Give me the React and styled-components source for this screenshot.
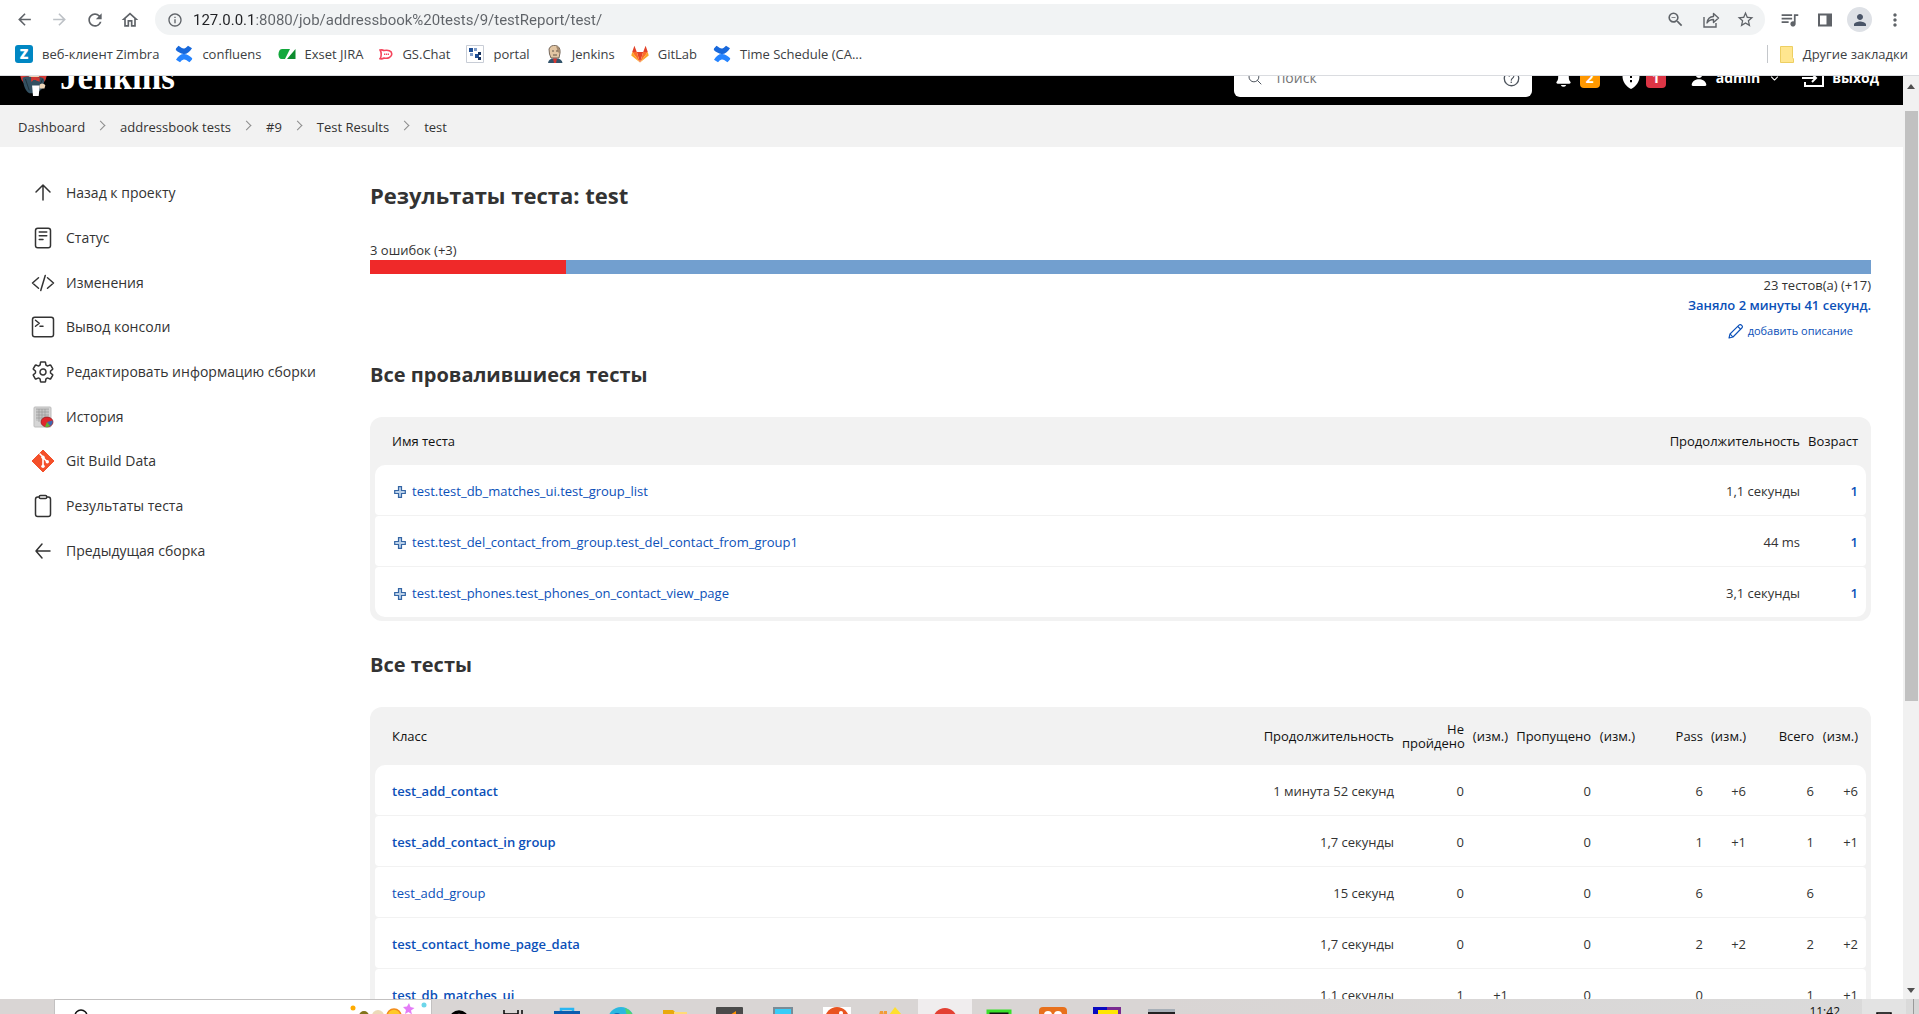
import React from "react";
import styled, { createGlobalStyle } from "styled-components";
import {
  MdArrowBack,
  MdArrowForward,
  MdRefresh,
  MdOutlineHome,
  MdInfoOutline,
  MdZoomOut,
  MdStarBorder,
  MdQueueMusic,
  MdPerson,
  MdMoreVert,
} from "react-icons/md";
import {
  IoReaderOutline,
  IoCodeSlashOutline,
  IoTerminalOutline,
  IoSettingsOutline,
  IoClipboardOutline,
  IoSearchOutline,
  IoHelpCircleOutline,
  IoNotifications,
  IoPerson,
  IoChevronDown,
} from "react-icons/io5";

const FONT = '"Open Sans", "Noto Sans", sans-serif';

const GlobalStyle = createGlobalStyle`
  *, *::before, *::after { box-sizing: border-box; }
  html, body { margin: 0; height: 100%; overflow: hidden; }
  body { font-family: ${FONT}; font-size: 13px; color: #333; background: #fff; }
  button, input { font-family: inherit; }
  a { text-decoration: none; color: inherit; }
  svg { display: block; flex: none; }
`;

const Screen = styled.div`
  height: 100vh;
  display: flex;
  flex-direction: column;
  overflow: hidden;
`;

/* ---------- browser chrome ---------- */

const Chrome = styled.header`
  flex: none;
  background: #fff;
  border-bottom: 1px solid #dadce0;
`;

const Toolbar = styled.div`
  display: flex;
  align-items: center;
  height: 36px;
  padding: 3px 7px 0 11px;
`;

const ChromeButton = styled.button`
  display: flex;
  align-items: center;
  justify-content: center;
  width: 35px;
  height: 28px;
  padding: 0;
  border: 0;
  background: none;
  color: ${(p) => (p.$faded ? "#bdc1c6" : "#5f6368")};
`;

const NavGroup = styled.div`
  display: flex;
  margin-right: 8px;
  margin-left: -4px;
`;

const AddressBar = styled.div`
  flex: 1;
  display: flex;
  align-items: center;
  height: 31px;
  padding: 0 2px 0 12px;
  border-radius: 16px;
  background: #f1f3f4;
  color: #5f6368;
  margin-right: 7px;
`;

const AddressInput = styled.input`
  flex: 1;
  margin-left: 10px;
  padding: 0;
  border: 0;
  outline: 0;
  font-family: Roboto, ${FONT};
  font-size: 15px;
  line-height: 20px;
  -webkit-text-fill-color: transparent;
  background: linear-gradient(to right, #202124 61px, #5f6368 61px);
  -webkit-background-clip: text;
  background-clip: text;
`;

const Avatar = styled.span`
  display: flex;
  align-items: center;
  justify-content: center;
  width: 25px;
  height: 25px;
  border-radius: 50%;
  background: #dee1e6;
  color: #4a5568;
`;

const Bookmarks = styled.nav`
  display: flex;
  align-items: center;
  height: 39px;
  padding: 0 11px 3px 15px;
`;

const Bookmark = styled.a`
  display: flex;
  align-items: center;
  gap: 9px;
  margin-right: 16px;
  font-size: 13px;
  line-height: 18px;
  color: #3c4043;
  white-space: nowrap;
`;

const OtherBookmarks = styled(Bookmark)`
  margin: 0 0 0 auto;
  padding-left: 12px;
  border-left: 1px solid #c4c7cb;
`;

const ZimbraMark = styled.span`
  width: 18px;
  height: 18px;
  border-radius: 3px;
  background: #0087c3;
  color: #fff;
  font-weight: 800;
  font-size: 14px;
  line-height: 18px;
  text-align: center;
`;

/* ---------- page viewport ---------- */

const Viewport = styled.div`
  flex: 1;
  min-height: 0;
  display: flex;
`;

const Page = styled.div`
  flex: 1;
  min-width: 0;
  overflow: hidden;
`;

const Scrollbar = styled.div`
  flex: none;
  width: 16px;
  display: flex;
  flex-direction: column;
  align-items: center;
  justify-content: space-between;
  background: #f1f1f1;
  padding: 8px 0 6px;
`;

const Track = styled.div`
  flex: 1;
  width: 13px;
  padding: 22px 0;
`;

const Thumb = styled.div`
  height: 69%;
  background: #c1c1c1;
`;

const Masthead = styled.div`
  display: flex;
  align-items: flex-end;
  height: 29px;
  overflow: hidden;
  background: #000;
  color: #fff;
`;

const MastheadRow = styled.div`
  flex: 1;
  display: flex;
  align-items: center;
  height: 54px;
  padding: 0 24px 0 18px;
`;

const Brand = styled.a`
  display: flex;
  align-items: center;
  gap: 11px;
  margin-right: auto;
  font-family: "Liberation Serif", serif;
  font-weight: 700;
  font-size: 35px;
  line-height: 36px;
`;

const SearchBox = styled.label`
  display: flex;
  align-items: center;
  gap: 14px;
  width: 298px;
  height: 38px;
  padding: 0 10px 0 13px;
  border-radius: 6px;
  background: #fff;
  color: #4d545d;
`;

const SearchInput = styled.input`
  flex: 1;
  min-width: 0;
  padding: 0;
  border: 0;
  outline: 0;
  background: none;
  font-size: 14px;
  line-height: 20px;
  &::placeholder { color: #757575; opacity: 1; }
`;

const MastheadLink = styled.a`
  display: flex;
  align-items: center;
  gap: ${(p) => p.$gap || 8}px;
  margin-left: ${(p) => p.$ml || 22}px;
  font-size: 14px;
  line-height: 20px;
  font-weight: 700;
`;

const Badge = styled.span`
  width: 20px;
  border-radius: 4px;
  background: ${(p) => p.$color};
  font-size: 14px;
  line-height: 20px;
  text-align: center;
`;

const Breadcrumbs = styled.nav`
  height: 42px;
  background: #f2f2f2;
`;

const Crumbs = styled.ol`
  display: flex;
  align-items: center;
  height: 100%;
  margin: 0;
  padding: 1px 18px 0;
  list-style: none;
`;

const Crumb = styled.li`
  display: flex;
  align-items: center;
  font-size: 13px;
  line-height: 18px;
  & + &::before {
    content: "";
    width: 7px;
    height: 7px;
    margin: 0 16px 2px 12px;
    border: solid #8c8c8c;
    border-width: 1px 1px 0 0;
    transform: rotate(45deg);
  }
`;

const Body = styled.div`
  display: flex;
`;

const Side = styled.nav`
  flex: none;
  width: 370px;
  padding: 24px 16px 0 31px;
`;

const Tasks = styled.ul`
  display: grid;
  grid-auto-rows: 1fr;
  height: 402px;
  margin: 0;
  padding: 0;
  list-style: none;
`;

const TaskLink = styled.a`
  display: flex;
  align-items: center;
  gap: 11px;
  height: 100%;
  font-size: 14px;
  line-height: 20px;
`;

const Main = styled.main`
  flex: 1;
  min-width: 0;
  padding: 32px 32px 0 0;
`;

const Title = styled.h1`
  margin: 0;
  font-size: 22px;
  line-height: 32px;
  font-weight: 700;
`;

const Subtitle = styled.h2`
  margin: 0;
  font-size: 20px;
  line-height: 30px;
  font-weight: 700;
`;

const Summary = styled.div`
  display: flex;
  flex-direction: column;
  margin: 29px 0 20px;
  font-size: 13px;
  line-height: 20px;
`;

const ResultBar = styled.div`
  display: flex;
  height: 14px;
  background: #729fcf;
`;

const FailedPart = styled.div`
  background: #ef2929;
`;

const SummaryRight = styled.div`
  display: flex;
  flex-direction: column;
  align-items: flex-end;
  padding-top: 1px;
`;

const LinkText = styled.a`
  color: #0b50b8;
  font-weight: ${(p) => p.$weight || 500};
`;

const EditLink = styled.a`
  display: flex;
  align-items: center;
  gap: 5px;
  margin: 7px 18px 0 0;
  color: #0b50b8;
  font-size: 11px;
  line-height: 18px;
  font-weight: 500;
`;

const TableFrame = styled.div`
  margin: 27px 0 29px;
  padding: 0 5px 3px;
  border-radius: 12px;
  background: #f2f2f2;
`;

const Table = styled.table`
  width: 100%;
  table-layout: fixed;
  border-collapse: separate;
  border-spacing: 0 1px;
`;

const Col = styled.col`
  width: ${(p) => (p.$w ? `${p.$w}px` : "auto")};
`;

const Th = styled.th`
  height: ${(p) => (p.$tall ? 56 : 46)}px;
  padding: ${(p) => (p.$first ? "0 8px 0 17px" : "0 8px 0 0")};
  font-size: 13px;
  line-height: 14px;
  font-weight: 400;
  color: #111;
  text-align: ${(p) => (p.$first ? "left" : "right")};
  white-space: ${(p) => (p.$wrap ? "normal" : "nowrap")};
`;

const Td = styled.td`
  height: 50px;
  padding: 1px 8px 0 0;
  background: #fff;
  font-size: 13px;
  line-height: 18px;
  text-align: right;
  white-space: nowrap;
  &:first-child {
    padding-left: 17px;
    text-align: left;
    border-radius: 4px 0 0 4px;
  }
  &:last-child { border-radius: 0 4px 4px 0; }
  tr:first-child > &:first-child { border-top-left-radius: 10px; }
  tr:first-child > &:last-child { border-top-right-radius: 10px; }
  tr:last-child > &:first-child { border-bottom-left-radius: 10px; }
  tr:last-child > &:last-child { border-bottom-right-radius: 10px; }
`;

const TestName = styled.span`
  display: flex;
  align-items: center;
  gap: 6px;
  padding-left: 2px;
`;

const ExpandButton = styled.button`
  padding: 2px 0 0;
  border: 0;
  background: none;
`;

/* ---------- desktop taskbar ---------- */

const Taskbar = styled.footer`
  flex: none;
  display: flex;
  height: 15px;
  overflow: hidden;
  background: linear-gradient(to right, #d9d5d4, #d9d5d4 60%, #dadada);
`;

const StartButton = styled.button`
  flex: none;
  width: 54px;
  height: 40px;
  padding: 12px 0 0 20px;
  border: 0;
  background: none;
`;

const TaskSearch = styled.div`
  flex: none;
  display: flex;
  justify-content: space-between;
  width: 378px;
  height: 40px;
  padding: 0 0 0 18px;
  border: solid #c3c1c1;
  border-width: 1px 1px 0;
  background: #fff;
`;

const TaskSlot = styled.button`
  flex: none;
  display: flex;
  justify-content: center;
  width: 54px;
  height: 40px;
  padding: 0;
  border: 0;
  background: ${(p) => (p.$active ? "#f0edee" : "none")};
`;

const Tray = styled.div`
  display: flex;
  margin-left: auto;
  height: 40px;
`;

const Clock = styled.time`
  padding: 4px 22px 0 0;
  font-size: 12px;
  line-height: 18px;
  color: #111;
`;

const Notices = styled.button`
  width: 44px;
  padding: 0 0 0 14px;
  border: 0;
  background: #e3e3e3;
`;

const ShowDesktop = styled.div`
  width: 13px;
  border-right: 5px solid #d6d6d6;
  box-shadow: inset -1px 0 #9a9a9a;
`;

/* ---------- drawings ---------- */

const ShareIcon = () => (
  <svg width="18" height="18" viewBox="0 0 18 18" fill="none" stroke="#5f6368" strokeWidth="1.4">
    <path d="M2 6v10h12v-4" />
    <path d="M5 12c.5-4 3-6.300 6.500-6.500V2.500L16.500 7l-5 4.500V8.500C8.500 8.500 6.500 9.600 5 12z" strokeLinejoin="round" />
  </svg>
);

const PanelIcon = () => (
  <svg width="16" height="16" viewBox="0 0 16 16">
    <path d="M1 1.500h14v13H1z M3 3.500v9h6.500v-9z" fill="#5f6368" fillRule="evenodd" />
  </svg>
);

const ConfluenceIcon = () => (
  <svg width="18" height="18" viewBox="0 0 18 18">
    <path d="M1 3.500 3.500.8C6 2.500 7.500 3.800 9.300 3.500 11 3.200 12 1.800 13 .8L17 3.300C14.500 7.500 11.500 9.300 8.500 9 5.500 8.500 3 7 .8 5z" fill="#1868db" />
    <path d="M17 14.500 14.500 17.200C12 15.500 10.500 14.200 8.700 14.500 7 14.800 6 16.200 5 17.200L1 14.700C3.500 10.500 6.500 8.600 9.500 9c3 .4 5.500 2.200 7.700 4.200z" fill="#2684ff" />
  </svg>
);

const ExsetIcon = () => (
  <svg width="18" height="18" viewBox="0 0 18 18">
    <path d="M4 4h8L7 14H3.500C1.500 14 .5 12 .5 9.500S1.500 4 4 4z" fill="#12a83c" />
    <path d="M17.500 4v10H9z" fill="#0c8c2e" />
  </svg>
);

const ChatIcon = () => (
  <svg width="14" height="14" viewBox="0 0 14 14" fill="none" stroke="#f5455c" strokeWidth="1.600">
    <path d="M1 3c2-.4 3.200 0 4 .6C9 2.400 12.800 4 12.800 7S9 12 5 11c-1.200.8-2.600 1-4 .7C2.600 10 2.600 5 1 3z" />
    <path d="M5 7.200h5" strokeDasharray="1.400 .6" />
  </svg>
);

const PortalIcon = () => (
  <svg width="18" height="18" viewBox="0 0 18 18">
    <path d="M.5.500h17v17H.5z" fill="#fff" stroke="#c8cdd6" />
    <path d="M3 3h4v4H3z M9 9h4v4H9z" fill="#1f4f96" />
    <path d="M8 3h3v3H8z M4 8h3v3H4z" fill="#7e9cc9" />
    <path d="M12 12h3v3h-3z M12 7h3v3h-3z" fill="#16325f" />
  </svg>
);

const ButlerIcon = () => (
  <svg width="17" height="18" viewBox="0 0 17 18">
    <path d="M3 4C4 1 7 0 9.500.500 13 1 14.500 4 14 8l-1 5H5L3.500 9z" fill="#e3c6a3" stroke="#57493f" strokeWidth=".8" />
    <path d="M10 1c3 1 4.500 3.500 4 8l-2-2z" fill="#a58b70" />
    <path d="M2 18c.5-3 2.500-4.500 5-4.500h4c3 0 5 1.500 5.500 4.500z" fill="#33546b" />
    <path d="M7 13.500h4l-1 4.500H8z" fill="#d33833" />
    <path d="M6 6h2M10 6h2M7 10h4" stroke="#57493f" strokeWidth=".9" />
  </svg>
);

const GitLabIcon = () => (
  <svg width="18" height="18" viewBox="0 0 18 18">
    <path d="M9 17.500 5.800 7h6.400z" fill="#e24329" />
    <path d="M9 17.500 5.800 7H1.200z M9 17.500 12.200 7h4.600z" fill="#fc6d26" />
    <path d="M1.200 7 .3 10.500 9 17.500z M16.800 7l.9 3.500L9 17.500z" fill="#fca326" />
    <path d="M1.200 7 3.400.8 5.800 7z M16.800 7 14.600.8 12.200 7z" fill="#e24329" />
  </svg>
);

const FolderIcon = () => (
  <svg width="14" height="17" viewBox="0 0 14 17">
    <path d="M.5.500h12v11l1 1.500v3.500H.5z" fill="#ffe68f" stroke="#edcf62" />
  </svg>
);

const JenkinsLogo = () => (
  <svg width="31" height="38" viewBox="0 0 31 40">
    <circle cx="15.500" cy="16" r="14" fill="#d33833" />
    <path d="M9 3c4-3 11-2 13 3s1 10-1 13H11C8 15 7 7 9 3z" fill="#f0d6b7" />
    <path d="M4 20c3-2 7-2 9-1l4 3 4-3c3 0 5 1 6 3l-2 9-6 5H11c-4-2-6-8-7-16z" fill="#335061" />
    <path d="m13 19 4 2 5-2v5l-5-2-4 2z" fill="#d33833" />
    <path d="M15 22h3l1 6h-5z" fill="#335061" />
    <path d="M14 28h8l-1 11h-6z" fill="#fff" />
    <path d="M22 27c2-2 5-1 6 1l-1 3h-5z" fill="#f0d6b7" />
    <path d="M7 21l4 12M25 21l-2 5" stroke="#1d2f3a" strokeWidth="1" />
  </svg>
);

const ShieldIcon = () => (
  <svg width="18" height="22" viewBox="0 0 18 22">
    <path d="M9 0 17.500 3v6c0 6-3.500 10.500-8.500 13C4 19.500.5 15 .5 9V3z" fill="#fff" />
    <path d="M8 5h2v6H8z M8 13h2v2.200H8z" fill="#000" />
  </svg>
);

const ExitIcon = () => (
  <svg width="22" height="20" viewBox="0 0 22 20" fill="none" stroke="#fff" strokeWidth="2">
    <path d="M3 6V2h18v16H3v-4" />
    <path d="M0 10h14M10 6l4 4-4 4" />
  </svg>
);

const ArrowIcon = ({ d }) => (
  <svg width="24" height="24" viewBox="0 0 24 24" fill="none" stroke="#333" strokeWidth="1.500" strokeLinecap="round" strokeLinejoin="round">
    <path d={d} />
  </svg>
);

const PencilIcon = () => (
  <svg width="15" height="15" viewBox="0 0 15 15" fill="none" stroke="#0b50b8" strokeWidth="1.100" strokeLinejoin="round">
    <path d="M1 14l1-4L11 1.200c.8-.8 2-.6 2.700.1s.9 1.900.1 2.700L5 13z" />
    <path d="M9.800 2.500l2.700 2.700M2.200 10.200l2.600 2.600" />
  </svg>
);

const HistoryIcon = () => (
  <svg width="24" height="24" viewBox="0 0 24 24">
    <rect x="3" y="2" width="17" height="20" rx="1" fill="#d6d6d6" stroke="#bdbdbd" />
    <path d="M5 4h13v12H5z" fill="#c6c6c6" />
    <path d="M5 4h13M5 7h13M5 10h13M5 13h13M8 4v13M11 4v13M14 4v13" stroke="#999" strokeWidth=".7" />
    <ellipse cx="16" cy="17" rx="6" ry="5" fill="#e0262b" stroke="#8d1b1e" strokeWidth=".7" />
    <path d="M16 17l5.500-1.500A5 5 0 0 1 19 21z" fill="#3e68b0" />
    <path d="M16 17l3 4a6 6 0 0 1-5 .8z" fill="#5fb336" />
  </svg>
);

const GitIcon = () => (
  <svg width="24" height="24" viewBox="0 0 24 24">
    <path d="M12 1 23 12 12 23 1 12z" fill="#f4502a" stroke="#f4502a" strokeLinejoin="round" />
    <path d="M8.500 4.500l3.500 3.500v9.500M12 8.500l4.500 4.500" stroke="#fff" strokeWidth="1.600" fill="none" />
    <circle cx="12" cy="8.200" r="1.700" fill="#fff" />
    <circle cx="12" cy="17.200" r="1.700" fill="#fff" />
    <circle cx="16.300" cy="12.700" r="1.700" fill="#fff" />
  </svg>
);

const PlusIcon = () => (
  <svg width="12" height="12" viewBox="0 0 12 12">
    <path d="M4.500.700h3v3.800h3.800v3H7.500v3.800h-3V7.500H.7v-3h3.800z" fill="#bcd2ea" stroke="#3465a4" strokeWidth="1.200" />
  </svg>
);

const Triangle = ({ down }) => (
  <svg width="8" height="5" viewBox="0 0 8 5">
    <path d={down ? "M0 0h8L4 5z" : "M0 5h8L4 0z"} fill="#505050" />
  </svg>
);

const WindowsIcon = () => (
  <svg width="16" height="16" viewBox="0 0 16 16">
    <path d="M0 2.500 6 1.500v6H0zM7 1.300 16 0v7.500H7zM0 8.500h6v6l-6-1zM7 8.500h9V16l-9-1.300z" fill="#000" />
  </svg>
);

const SearchGlyph = () => (
  <svg width="20" height="24" viewBox="0 0 20 24" fill="none" stroke="#111" strokeWidth="1.500">
    <circle cx="8" cy="16" r="6" />
  </svg>
);

const Decoration = () => (
  <svg width="85" height="20" viewBox="0 0 85 20">
    <circle cx="7" cy="8" r="2.500" fill="#ffab00" />
    <circle cx="18" cy="16" r="5" fill="#82731a" />
    <circle cx="32" cy="16" r="6" fill="#ecd9b8" />
    <circle cx="48" cy="16" r="7" fill="#ffc928" stroke="#f28c1c" strokeWidth="1.500" />
    <path d="M63 3l1.500 4 4 1-3.500 2.500 1 4-3.500-2.500-3.500 2 1-4-3-3 4-.5z" fill="#e47cf7" />
    <circle cx="78" cy="5" r="2.500" fill="#6cd6ea" />
  </svg>
);

const TASK_ICONS = [
  <circle cx="14" cy="21" r="8" fill="none" stroke="#000" strokeWidth="3.500" />,
  <path d="M5 11v4h14v-4M23 11v10" fill="none" stroke="#000" strokeWidth="1.500" />,
  <g>
    <path d="M8 13v-3h12v3" fill="none" stroke="#29b6f2" strokeWidth="2.500" />
    <path d="M1 12h26v16H1z" fill="#0b5cae" />
  </g>,
  <g>
    <circle cx="14" cy="21" r="13" fill="#2bb8e0" />
    <path d="M18 9a13 13 0 0 1 9 12h-6z" fill="#4fd66f" />
    <circle cx="10" cy="18" r="4" fill="#0c6ab8" />
  </g>,
  <g>
    <path d="M2 11h10l2 2v12H2z" fill="#e9a90c" />
    <path d="M13 13h13v12H13z" fill="#ffdb78" />
  </g>,
  <g>
    <rect x="1" y="8" width="27" height="20" rx="1" fill="#4a4a4a" />
    <path d="M12 18 21 12v8z" fill="#ff9300" />
  </g>,
  <rect x="5" y="9" width="18" height="18" fill="#38cdf8" stroke="#7b8b96" strokeWidth="2" />,
  <g>
    <path d="M0 8h28v20H0z" fill="#fff" />
    <circle cx="14" cy="20" r="12" fill="#e95420" />
    <circle cx="18" cy="14" r="2" fill="#fff" />
  </g>,
  <g>
    <path d="M12 16l6-8 7 8z" fill="#ffdf2e" />
    <path d="M3 12h3v4H2zM7 12h3v4H6z" fill="#f29b38" />
  </g>,
  <circle cx="14" cy="21" r="12" fill="#e34133" />,
  <path d="M3 12h22v10H3z" fill="#111" stroke="#3be02b" strokeWidth="3" />,
  <g>
    <rect x="0" y="8" width="28" height="22" rx="4" fill="#e8701c" />
    <circle cx="9" cy="16" r="4" fill="#fff" />
    <circle cx="19" cy="16" r="4" fill="#fff" />
  </g>,
  <g>
    <path d="M0 8h14v20H0z" fill="#0a0ac0" />
    <path d="M14 8h14v20H14z" fill="#7a2a90" />
    <path d="M7 20v-7h18" fill="none" stroke="#ffe600" strokeWidth="4" />
  </g>,
  <g>
    <path d="M1 11h27v16H1z" fill="#222" />
    <path d="M1 10h27v3H1z" fill="#a8b0b8" />
  </g>,
];

/* ---------- data ---------- */

const BOOKMARKS = [
  [<ZimbraMark aria-hidden="true">Z</ZimbraMark>, "веб-клиент Zimbra"],
  [<ConfluenceIcon />, "confluens"],
  [<ExsetIcon />, "Exset JIRA"],
  [<ChatIcon />, "GS.Chat"],
  [<PortalIcon />, "portal"],
  [<ButlerIcon />, "Jenkins"],
  [<GitLabIcon />, "GitLab"],
  [<ConfluenceIcon />, "Time Schedule (CA..."],
];

const CRUMBS = ["Dashboard", "addressbook tests", "#9", "Test Results", "test"];

const TASKS = [
  [<ArrowIcon d="M5 11l7-7 7 7M12 4.500V19" />, "Назад к проекту"],
  [<IoReaderOutline size={24} />, "Статус"],
  [<IoCodeSlashOutline size={24} />, "Изменения"],
  [<IoTerminalOutline size={24} />, "Вывод консоли"],
  [<IoSettingsOutline size={24} />, "Редактировать информацию сборки"],
  [<HistoryIcon />, "История"],
  [<GitIcon />, "Git Build Data"],
  [<IoClipboardOutline size={24} />, "Результаты теста"],
  [<ArrowIcon d="M11 5l-6 7 6 7M5.500 12H19" />, "Предыдущая сборка"],
];

const FAILED = [
  ["test.test_db_matches_ui.test_group_list", "1,1 секунды", "1"],
  ["test.test_del_contact_from_group.test_del_contact_from_group1", "44 ms", "1"],
  ["test.test_phones.test_phones_on_contact_view_page", "3,1 секунды", "1"],
];

const HEADERS = ["Продолжительность", "Не пройдено", "(изм.)", "Пропущено", "(изм.)", "Pass", "(изм.)", "Всего", "(изм.)"];
const WIDTHS = [150, 70, 44, 83, 44, 68, 43, 68, 44];

const CLASSES = [
  ["test_add_contact", 600, ["1 минута 52 секунд", "0", "", "0", "", "6", "+6", "6", "+6"]],
  ["test_add_contact_in group", 600, ["1,7 секунды", "0", "", "0", "", "1", "+1", "1", "+1"]],
  ["test_add_group", 400, ["15 секунд", "0", "", "0", "", "6", "", "6", ""]],
  ["test_contact_home_page_data", 600, ["1,7 секунды", "0", "", "0", "", "2", "+2", "2", "+2"]],
  ["test_db_matches_ui", 600, ["1,1 секунды", "1", "+1", "0", "", "0", "", "1", "+1"]],
];

const BrowserChrome = () => (
  <Chrome>
    <Toolbar>
      <NavGroup>
        <ChromeButton aria-label="Назад"><MdArrowBack size={19} /></ChromeButton>
        <ChromeButton aria-label="Вперёд" $faded><MdArrowForward size={19} /></ChromeButton>
        <ChromeButton aria-label="Обновить"><MdRefresh size={20} /></ChromeButton>
        <ChromeButton aria-label="Домой"><MdOutlineHome size={20} /></ChromeButton>
      </NavGroup>
      <AddressBar>
        <MdInfoOutline size={16} />
        <AddressInput aria-label="Адрес" defaultValue="127.0.0.1:8080/job/addressbook%20tests/9/testReport/test/" />
        <ChromeButton aria-label="Масштаб"><MdZoomOut size={19} /></ChromeButton>
        <ChromeButton aria-label="Поделиться"><ShareIcon /></ChromeButton>
        <ChromeButton aria-label="В закладки"><MdStarBorder size={19} /></ChromeButton>
      </AddressBar>
      <ChromeButton aria-label="Медиа"><MdQueueMusic size={21} /></ChromeButton>
      <ChromeButton aria-label="Боковая панель"><PanelIcon /></ChromeButton>
      <ChromeButton aria-label="Профиль"><Avatar><MdPerson size={18} /></Avatar></ChromeButton>
      <ChromeButton aria-label="Меню"><MdMoreVert size={20} /></ChromeButton>
    </Toolbar>
    <Bookmarks>
      {BOOKMARKS.map(([icon, text]) => (
        <Bookmark href="#" key={text}>{icon}{text}</Bookmark>
      ))}
      <OtherBookmarks href="#"><FolderIcon />Другие закладки</OtherBookmarks>
    </Bookmarks>
  </Chrome>
);

const PageHeader = () => (
  <>
    <Masthead>
      <MastheadRow>
        <Brand href="#"><JenkinsLogo />Jenkins</Brand>
        <SearchBox>
          <IoSearchOutline size={16} />
          <SearchInput type="text" placeholder="поиск" aria-label="поиск" />
          <IoHelpCircleOutline size={21} />
        </SearchBox>
        <MastheadLink href="#" $gap={7}><IoNotifications size={19} /><Badge $color="#ff9800">2</Badge></MastheadLink>
        <MastheadLink href="#" $gap={6}><ShieldIcon /><Badge $color="#dc3545">1</Badge></MastheadLink>
        <MastheadLink href="#" $ml={24}><IoPerson size={18} />admin</MastheadLink>
        <MastheadLink href="#" $ml={9} aria-label="Меню пользователя"><IoChevronDown size={11} /></MastheadLink>
        <MastheadLink href="#" $gap={8}><ExitIcon />выход</MastheadLink>
      </MastheadRow>
    </Masthead>
    <Breadcrumbs>
      <Crumbs>
        {CRUMBS.map((c) => (
          <Crumb key={c}><a href="#">{c}</a></Crumb>
        ))}
      </Crumbs>
    </Breadcrumbs>
  </>
);

const FailedTable = () => (
  <TableFrame>
    <Table>
      <colgroup><Col /><Col $w={160} /><Col $w={58} /></colgroup>
      <thead>
        <tr><Th $first>Имя теста</Th><Th>Продолжительность</Th><Th>Возраст</Th></tr>
      </thead>
      <tbody>
        {FAILED.map(([name, time, age]) => (
          <tr key={name}>
            <Td>
              <TestName>
                <ExpandButton aria-label="Подробнее"><PlusIcon /></ExpandButton>
                <LinkText href="#">{name}</LinkText>
              </TestName>
            </Td>
            <Td>{time}</Td>
            <Td><LinkText href="#" $weight={600}>{age}</LinkText></Td>
          </tr>
        ))}
      </tbody>
    </Table>
  </TableFrame>
);

const ClassTable = () => (
  <TableFrame>
    <Table>
      <colgroup>
        <Col />
        {WIDTHS.map((w, i) => <Col key={i} $w={w} />)}
      </colgroup>
      <thead>
        <tr>
          <Th $first $tall>Класс</Th>
          {HEADERS.map((h, i) => <Th key={i} $tall $wrap={i === 1}>{h}</Th>)}
        </tr>
      </thead>
      <tbody>
        {CLASSES.map(([name, weight, cells]) => (
          <tr key={name}>
            <Td><LinkText href="#" $weight={weight}>{name}</LinkText></Td>
            {cells.map((c, i) => <Td key={i}>{c}</Td>)}
          </tr>
        ))}
      </tbody>
    </Table>
  </TableFrame>
);

const DesktopBar = () => (
  <Taskbar>
    <StartButton aria-label="Пуск"><WindowsIcon /></StartButton>
    <TaskSearch><SearchGlyph /><Decoration /></TaskSearch>
    {TASK_ICONS.map((icon, i) => (
      <TaskSlot key={i} $active={i === 9} aria-label={`Приложение ${i + 1}`}>
        <svg width="28" height="30" viewBox="0 0 28 30">{icon}</svg>
      </TaskSlot>
    ))}
    <Tray>
      <Clock>11:42</Clock>
      <Notices aria-label="Уведомления">
        <svg width="16" height="40" viewBox="0 0 16 40"><path d="M1 14h14v12H1z" fill="none" stroke="#000" strokeWidth="1.500" /></svg>
      </Notices>
      <ShowDesktop />
    </Tray>
  </Taskbar>
);

export default function App() {
  return (
    <Screen>
      <GlobalStyle />
      <BrowserChrome />
      <Viewport>
        <Page>
          <PageHeader />
          <Body>
            <Side>
              <Tasks>
                {TASKS.map(([icon, text]) => (
                  <li key={text}><TaskLink href="#">{icon}{text}</TaskLink></li>
                ))}
              </Tasks>
            </Side>
            <Main>
              <Title>Результаты теста: test</Title>
              <Summary>
                <span>3 ошибок (+3)</span>
                <ResultBar><FailedPart style={{ width: `${(3 / 23) * 100}%` }} /></ResultBar>
                <SummaryRight>
                  <span>23 тестов(а) (+17)</span>
                  <LinkText href="#" $weight={600}>Заняло 2 минуты 41 секунд.</LinkText>
                  <EditLink href="#"><PencilIcon />добавить описание</EditLink>
                </SummaryRight>
              </Summary>
              <Subtitle>Все провалившиеся тесты</Subtitle>
              <FailedTable />
              <Subtitle>Все тесты</Subtitle>
              <ClassTable />
            </Main>
          </Body>
        </Page>
        <Scrollbar>
          <Triangle />
          <Track><Thumb /></Track>
          <Triangle down />
        </Scrollbar>
      </Viewport>
      <DesktopBar />
    </Screen>
  );
}
